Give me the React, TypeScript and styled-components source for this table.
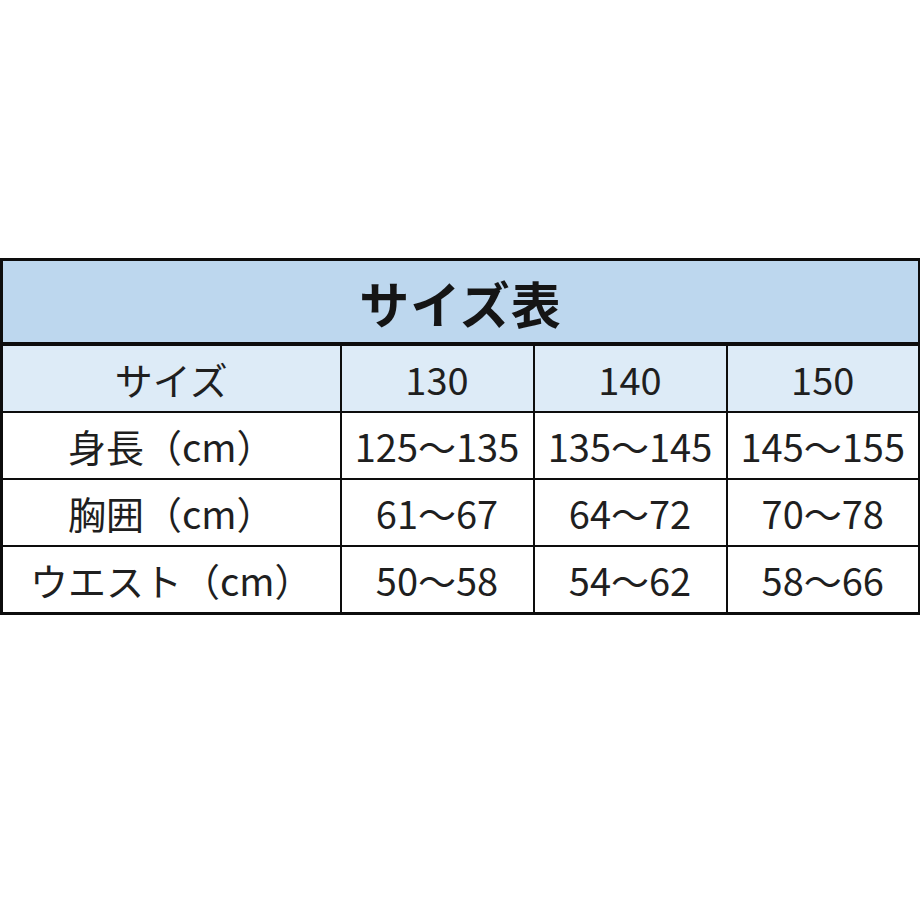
import styled, {createGlobalStyle} from 'styled-components';

const GlobalStyle = createGlobalStyle`
  html, body {
    margin: 0;
    padding: 0;
    background: #ffffff;
  }
  body {
    font-family: "Noto Sans CJK JP", "Noto Sans", sans-serif;
    color: #151515;
  }
`;

const Page = styled.div`
  width: 920px;
  height: 920px;
  padding-top: 258px;
  box-sizing: border-box;
`;

const SizeTable = styled.table`
  width: 918px;
  border-collapse: collapse;
  table-layout: fixed;
  border: 3px solid #0d0d0d;
`;

const TitleCell = styled.th`
  height: 81px;
  padding: 0;
  background: #bdd7ee;
  border-bottom: 4px solid #0d0d0d;
  font-size: 50px;
  font-weight: 700;
  line-height: 1;
  letter-spacing: 1px;
  text-align: center;
  vertical-align: middle;
`;

const Cell = styled.td<{$head?: boolean}>`
  height: 65px;
  padding: 0;
  border: 2px solid #0d0d0d;
  background: ${p => (p.$head ? '#ddebf7' : '#ffffff')};
  font-size: 38px;
  font-weight: 400;
  line-height: 1;
  text-align: center;
  vertical-align: middle;
  white-space: nowrap;
  color: #1f1f1f;
`;

const rows: string[][] = [
  ['身長（cm）', '125～135', '135～145', '145～155'],
  ['胸囲（cm）', '61～67', '64～72', '70～78'],
  ['ウエスト（cm）', '50～58', '54～62', '58～66'],
];

const App = () => {
  return (
    <>
      <GlobalStyle />
      <Page>
        <SizeTable>
          <colgroup>
            <col style={{width: 339}} />
            <col style={{width: 193}} />
            <col style={{width: 193}} />
            <col style={{width: 193}} />
          </colgroup>
          <thead>
            <tr>
              <TitleCell colSpan={4}>サイズ表</TitleCell>
            </tr>
          </thead>
          <tbody>
            <tr>
              <Cell $head>サイズ</Cell>
              <Cell $head>130</Cell>
              <Cell $head>140</Cell>
              <Cell $head>150</Cell>
            </tr>
            {rows.map(row => (
              <tr key={row[0]}>
                {row.map(value => (
                  <Cell key={value}>{value}</Cell>
                ))}
              </tr>
            ))}
          </tbody>
        </SizeTable>
      </Page>
    </>
  );
};

export default App;
